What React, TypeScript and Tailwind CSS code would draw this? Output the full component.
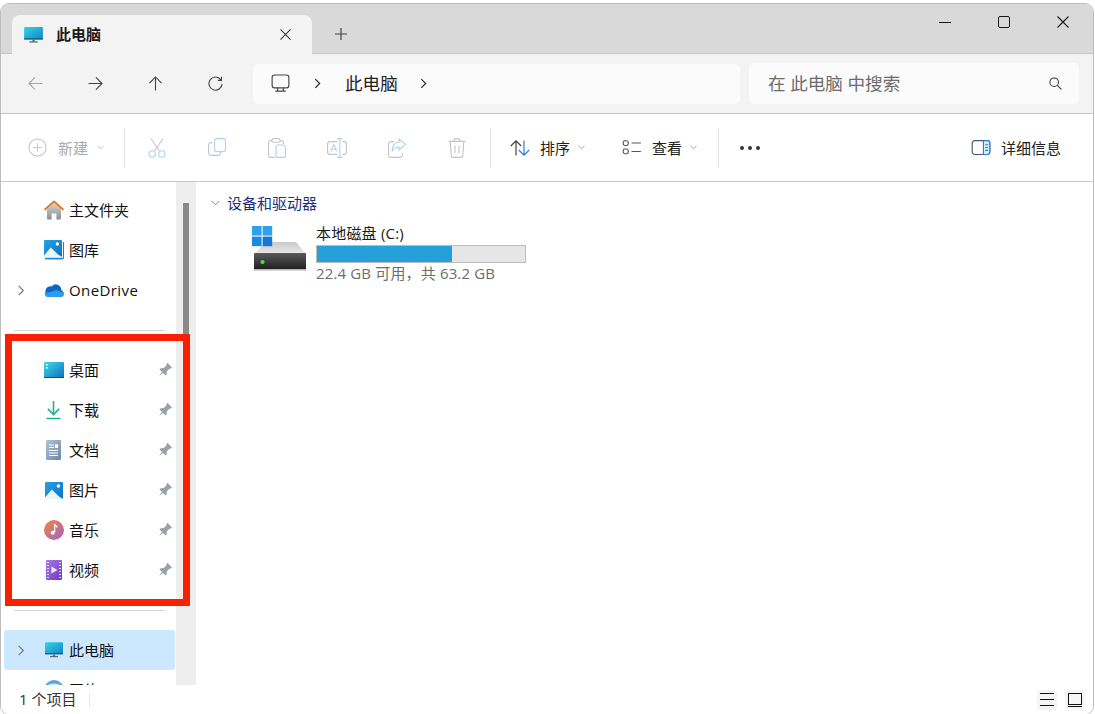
import React from 'react';

type IconProps = { className?: string };

const line = { fill: 'none', stroke: 'currentColor', strokeWidth: 1.2 };

// 导航 / 工具栏 图标
const ArrowLeft = ({ className }: IconProps) => (
  <svg viewBox="0 0 16 16" className={className} {...line}>
    <path d="M15.5 8H1M7.5 1.5 1 8l6.5 6.5" />
  </svg>
);
const ArrowRight = ({ className }: IconProps) => (
  <svg viewBox="0 0 16 16" className={className} {...line}>
    <path d="M.5 8H15M8.5 1.5 15 8l-6.5 6.5" />
  </svg>
);
const ArrowUp = ({ className }: IconProps) => (
  <svg viewBox="0 0 16 16" className={className} {...line}>
    <path d="M8 15.5V1M1.5 7.5 8 1l6.5 6.5" />
  </svg>
);
const Refresh = ({ className }: IconProps) => (
  <svg viewBox="0 0 16 16" className={className} {...line}>
    <path d="M13.8 4.2A7 7 0 1 0 15 8.4M14.4.8v3.9h-3.9" />
  </svg>
);
const Chevron = ({ className }: IconProps) => (
  <svg viewBox="0 0 8 12" className={className} fill="none" stroke="currentColor" strokeWidth={1.3}>
    <path d="M1.5 1 6.5 6l-5 5" />
  </svg>
);
const ChevronDown = ({ className }: IconProps) => (
  <svg viewBox="0 0 10 6" className={className} fill="none" stroke="currentColor" strokeWidth={1}>
    <path d="M.8.8 5 5l4.2-4.2" />
  </svg>
);
const Monitor = ({ className }: IconProps) => (
  <svg viewBox="0 0 20 20" className={className} {...line}>
    <rect x="1.2" y="1" width="17.6" height="13.6" rx="2.4" />
    <path d="M7 14.6v3M13 14.6v3M4.5 18h11" />
  </svg>
);
const Cross = ({ className }: IconProps) => (
  <svg viewBox="0 0 12 12" className={className} fill="none" stroke="currentColor" strokeWidth={1.1}>
    <path d="M.5.5l11 11M11.5.5l-11 11" />
  </svg>
);
const Search = ({ className }: IconProps) => (
  <svg viewBox="0 0 14 14" className={className} fill="none" stroke="currentColor" strokeWidth={1.1}>
    <circle cx="5.6" cy="5.6" r="4.6" />
    <path d="m9 9 4.4 4.4" />
  </svg>
);

const NewIcon = () => (
  <svg viewBox="0 0 20 20" className="w-[19px] h-[19px]" fill="none" strokeWidth={1.1}>
    <circle cx="10" cy="10" r="9" stroke="#c4c4c4" />
    <path d="M10 5.5v9M5.5 10h9" stroke="#a9d2f3" />
  </svg>
);
const CutIcon = () => (
  <svg viewBox="0 0 18 20" className="w-[18px] h-[20px]" fill="none" strokeWidth={1.1}>
    <path d="M3 .5 11.4 13M15 .5 6.6 13" stroke="#c4c4c4" />
    <circle cx="4.2" cy="16" r="3.2" stroke="#a9d2f3" />
    <circle cx="13.8" cy="16" r="3.2" stroke="#a9d2f3" />
  </svg>
);
const CopyIcon = () => (
  <svg viewBox="0 0 18 18" className="w-[18px] h-[18px]" fill="none" strokeWidth={1.1}>
    <path d="M4.5 4.6H3A2.4 2.4 0 0 0 .6 7v8A2.4 2.4 0 0 0 3 17.4h7a2.4 2.4 0 0 0 2.4-2.4v-1" stroke="#c4c4c4" />
    <rect x="6.6" y=".6" width="10.8" height="13" rx="2.4" stroke="#a9d2f3" />
  </svg>
);
const PasteIcon = () => (
  <svg viewBox="0 0 18 20" className="w-[18px] h-[20px]" fill="none" strokeWidth={1.1}>
    <path d="M4 2.6H2.6A2 2 0 0 0 .6 4.6v12.8a2 2 0 0 0 2 2H7M12 2.6h1.4a2 2 0 0 1 2 2V6" stroke="#c4c4c4" />
    <rect x="4" y=".6" width="8" height="3.6" rx="1.4" stroke="#c4c4c4" />
    <rect x="8" y="7" width="9.4" height="12.4" rx="2" stroke="#a9d2f3" />
  </svg>
);
const RenameIcon = () => (
  <svg viewBox="0 0 20 20" className="w-[20px] h-[20px]" fill="none" strokeWidth={1.1}>
    <path d="M10 3.6H3A2.4 2.4 0 0 0 .6 6v8A2.4 2.4 0 0 0 3 16.4h7M15.5 3.6H17A2.4 2.4 0 0 1 19.4 6v8a2.4 2.4 0 0 1-2.4 2.4h-1.5" stroke="#c4c4c4" />
    <path d="M10 .6h5.6M10 19.4h5.6M12.8.6v18.8M3.8 13.4 6.8 6.6l3 6.8M4.8 11.2h4" stroke="#a9d2f3" />
  </svg>
);
const ShareIcon = () => (
  <svg viewBox="0 0 18 20" className="w-[18px] h-[20px]" fill="none" strokeWidth={1.1}>
    <path d="M6 3.6H3A2.4 2.4 0 0 0 .6 6v11A2.4 2.4 0 0 0 3 19.4h9a2.4 2.4 0 0 0 2.4-2.4v-2" stroke="#c4c4c4" />
    <path d="M11 .8 17.4 6.4 11 12V9C7.5 9 5.4 10.4 4 13.4 4.2 8 6.8 4.4 11 4Z" stroke="#a9d2f3" />
  </svg>
);
const TrashIcon = () => (
  <svg viewBox="0 0 18 20" className="w-[18px] h-[20px]" fill="none" stroke="#c4c4c4" strokeWidth={1.1}>
    <path d="M.5 3.4h17M6 3.2V2.4A1.8 1.8 0 0 1 7.8.6h2.4A1.8 1.8 0 0 1 12 2.4v.8M2.2 3.6l1 13.6a2.2 2.2 0 0 0 2.2 2.2h7.2a2.2 2.2 0 0 0 2.2-2.2l1-13.6M7 7.6v7.6M11 7.6v7.6" />
  </svg>
);
const SortIcon = () => (
  <svg viewBox="0 0 20 16" className="w-[20px] h-[16px]" fill="none" strokeWidth={1.2}>
    <path d="M6 15.5V1M.8 6 6 .8 11.2 6" stroke="#444" />
    <path d="M14 .5V15M8.8 10l5.2 5.2 5.2-5.2" stroke="#1b84dc" />
  </svg>
);
const ViewIcon = () => (
  <svg viewBox="0 0 20 16" className="w-[20px] h-[15px]" fill="none" stroke="#555" strokeWidth={1.2}>
    <rect x=".6" y=".8" width="5.4" height="5" rx="1.8" />
    <rect x=".6" y="9.6" width="5.4" height="5" rx="1.8" />
    <path d="M9.5 3.2h10M9.5 12.2h10" />
  </svg>
);
const DetailsIcon = () => (
  <svg viewBox="0 0 20 16" className="w-[20px] h-[15px]" fill="none" strokeWidth={1.2}>
    <rect x=".6" y=".6" width="18.8" height="14.8" rx="2.8" stroke="#4b5563" />
    <path d="M12.6.6h4A2.8 2.8 0 0 1 19.4 3.4v9.2a2.8 2.8 0 0 1-2.8 2.8h-4Z" fill="#d6eafb" stroke="#1b84dc" />
    <path d="M14.5 5h3M14.5 8h3M14.5 11h3" stroke="#1b84dc" />
  </svg>
);

// 彩色图标
const PcIcon = ({ className }: IconProps) => (
  <svg viewBox="0 0 20 17" className={className}>
    <defs>
      <linearGradient id="pc" x1="0" y1="0" x2="1" y2="1">
        <stop offset="0" stopColor="#35d4e4" />
        <stop offset="1" stopColor="#1283c9" />
      </linearGradient>
    </defs>
    <rect x="0" y="0" width="20" height="13" rx="1" fill="url(#pc)" />
    <rect x="0" y="12" width="20" height="1.4" fill="#0b5a8a" />
    <rect x="8.6" y="13.4" width="2.8" height="2" fill="#5f7f90" />
    <rect x="5.6" y="15.2" width="8.8" height="1.3" fill="#56616b" />
  </svg>
);
const HomeIcon = () => (
  <svg viewBox="0 0 20 20" className="w-[20px] h-[20px]">
    <defs>
      <linearGradient id="hm" x1="0" y1="0" x2="0" y2="1">
        <stop offset="0" stopColor="#d4d4d4" />
        <stop offset="1" stopColor="#8f8f8f" />
      </linearGradient>
    </defs>
    <path d="M3 9 10 2.6 17 9v9.6a.8.8 0 0 1-.8.8H12.4v-6H7.6v6H3.8a.8.8 0 0 1-.8-.8Z" fill="url(#hm)" />
    <path d="M.6 9.8 10 1.4l9.4 8.4" fill="none" stroke="#e8750f" strokeWidth={1.9} />
  </svg>
);
const PictureGlyph = ({ id }: { id: string }) => (
  <>
    <defs>
      <linearGradient id={id} x1="0" y1="0" x2="1" y2="1">
        <stop offset="0" stopColor="#27a3e3" />
        <stop offset="1" stopColor="#0f6fc6" />
      </linearGradient>
    </defs>
    <rect x="0" y="0" width="18" height="17" rx="1" fill={`url(#${id})`} />
    <circle cx="13.4" cy="4" r="1.7" fill="#fff" />
    <path d="M0 15.6 6.8 7.6 14 14.6 18 17H0Z" fill="#eaf6fd" />
  </>
);
const GalleryIcon = () => (
  <svg viewBox="0 0 20 20" className="w-[20px] h-[20px]">
    <path d="M1 18.4h17.6a1 1 0 0 0 1-1V2" fill="none" stroke="#1c7fcf" strokeWidth={1.2} />
    <path d="M.6 19.4h18" fill="none" stroke="#8fc3ea" strokeWidth={1} />
    <PictureGlyph id="gal" />
  </svg>
);
const PictureIconSmall = () => (
  <svg viewBox="0 0 18 17" className="w-[18px] h-[17px]">
    <PictureGlyph id="pic" />
  </svg>
);
const CloudIcon = () => (
  <svg viewBox="0 0 20 13" className="w-[20px] h-[14px]" preserveAspectRatio="none">
    <path d="M5 12.8h11.8a3 3 0 0 0 .6-5.9A5.6 5.6 0 0 0 7.6 3.2 4.8 4.8 0 0 0 5 12.8Z" fill="#0f66c2" />
    <path d="M4 13h13.2a2.8 2.8 0 0 0 2.4-4L12 6.4 7 8.4 .6 9.2A3.8 3.8 0 0 0 4 13Z" fill="#2b9bea" />
  </svg>
);
const DesktopIcon = () => (
  <svg viewBox="0 0 20 16" className="w-[20px] h-[16px]">
    <defs>
      <linearGradient id="dsk" x1="0" y1="0" x2="1" y2="1">
        <stop offset="0" stopColor="#3edbe6" />
        <stop offset="1" stopColor="#0f6fc0" />
      </linearGradient>
    </defs>
    <rect width="20" height="16" rx="1" fill="url(#dsk)" />
    <rect y="15" width="20" height="1" fill="#0b4f7e" />
    <rect x="2" y="2" width="1.6" height="1.6" fill="#fff" />
    <rect x="2" y="5" width="1.6" height="1.6" fill="#fff" />
  </svg>
);
const DownloadIcon = () => (
  <svg viewBox="0 0 16 20" className="w-[15px] h-[20px]" fill="none" stroke="#1db394" strokeWidth={1.7}>
    <path d="M8 .5v14M2 8.8 8 14.8l6-6M.5 19h15" />
  </svg>
);
const DocIcon = () => (
  <svg viewBox="0 0 15 20" className="w-[15px] h-[20px]">
    <defs>
      <linearGradient id="doc" x1="0" y1="0" x2="1" y2="1">
        <stop offset="0" stopColor="#b4c3d6" />
        <stop offset="1" stopColor="#6b86a8" />
      </linearGradient>
    </defs>
    <rect width="15" height="20" rx="1.2" fill="url(#doc)" />
    <path d="M3 5h5M3 7.5h5M3 10.5h9M3 13h9M3 15.5h9" stroke="#fff" strokeWidth={1} />
    <rect x="9" y="4.4" width="3" height="3.6" fill="#fff" />
  </svg>
);
const MusicIcon = () => (
  <svg viewBox="0 0 20 20" className="w-[20px] h-[20px]">
    <defs>
      <linearGradient id="mus" x1="0" y1="0" x2="1" y2="1">
        <stop offset="0" stopColor="#ef8a3c" />
        <stop offset="1" stopColor="#a45fc9" />
      </linearGradient>
    </defs>
    <circle cx="10" cy="10" r="10" fill="url(#mus)" />
    <path d="M10.6 4v8" stroke="#fff" strokeWidth={1.3} fill="none" />
    <path d="M10.6 4c.4 2 2 2 2.6 3.4" stroke="#fff" strokeWidth={1.3} fill="none" />
    <circle cx="8.8" cy="12.8" r="2" fill="#fff" />
  </svg>
);
const VideoIcon = () => (
  <svg viewBox="0 0 16 20" className="w-[16px] h-[20px]">
    <defs>
      <linearGradient id="vid" x1="0" y1="0" x2="1" y2="1">
        <stop offset="0" stopColor="#a77be8" />
        <stop offset="1" stopColor="#7236c2" />
      </linearGradient>
    </defs>
    <rect width="16" height="20" rx="1.2" fill="url(#vid)" />
    <path d="M5.4 6.4 11.4 10l-6 3.6Z" fill="#f2e9fd" />
    <path d="M1 2.5h2M1 5.5h2M1 8.5h2M1 11.5h2M1 14.5h2M1 17.5h2M13 2.5h2M13 5.5h2M13 8.5h2M13 11.5h2M13 14.5h2M13 17.5h2" stroke="#e9defa" strokeWidth={1.2} />
  </svg>
);
const NetworkIcon = () => (
  <svg viewBox="0 0 20 20" className="w-[20px] h-[20px]">
    <circle cx="10" cy="10" r="10" fill="#5aa7de" />
    <path d="M4 5c3-2 9-2 12 0-3 3-9 3-12 0Z" fill="#cfe6f6" />
  </svg>
);
const PinIcon = () => (
  <svg viewBox="0 0 16 16" className="w-[15px] h-[15px] mt-[1px]" fill="#98a2aa">
    <g transform="rotate(45 8 8)">
      <path d="M4.6 0h6.8v1.6L10.4 2.8v4l2.2 2.4v1.8H3.4V9.2l2.2-2.4v-4L4.6 1.6Z" />
      <path d="M7.2 11h1.6L8 16.4Z" />
    </g>
  </svg>
);
const DriveIcon = () => (
  <svg viewBox="0 0 54 45" className="w-[54px] h-[45px]">
    <defs>
      <linearGradient id="drv" x1="0" y1="0" x2="0" y2="1">
        <stop offset="0" stopColor="#5a5a5a" />
        <stop offset="1" stopColor="#1e1e1e" />
      </linearGradient>
      <linearGradient id="drvTop" x1="0" y1="0" x2="0" y2="1">
        <stop offset="0" stopColor="#c9c9c9" />
        <stop offset="1" stopColor="#e9e9e9" />
      </linearGradient>
    </defs>
    <path d="M14 16h30l10 12H2Z" fill="url(#drvTop)" />
    <rect x="2" y="27" width="52" height="17" rx="1" fill="url(#drv)" />
    <rect x="2" y="43" width="52" height="1.5" fill="#b5b5b5" />
    <circle cx="10.5" cy="36" r="2.1" fill="#3bea3b" />
    <rect x="0" y="0" width="9.6" height="9.6" fill="#2ea3ec" />
    <rect x="10.6" y="0" width="9.6" height="9.6" fill="#2ea3ec" />
    <rect x="0" y="10.6" width="9.6" height="9.6" fill="#1a8be0" />
    <rect x="10.6" y="10.6" width="9.6" height="9.6" fill="#1478d4" />
  </svg>
);

const Divider = () => <div className="w-px h-[40px] bg-[#e3e3e3]" />;

const ToolSlot = ({ children }: { children: React.ReactNode }) => (
  <div className="w-[60px] flex justify-center">{children}</div>
);

interface NavRowProps {
  icon: React.ReactNode;
  label: string;
  pinned?: boolean;
  expand?: boolean;
  selected?: boolean;
  latin?: boolean;
}

const NavRow = ({ icon, label, pinned, expand, selected, latin }: NavRowProps) => (
  <div className={`h-[40px] w-[171px] ml-[3px] flex items-center shrink-0 rounded-[3px] ${selected ? 'bg-[#cce8ff]' : ''}`}>
    <div className="w-[37px] pl-[13px]">
      {expand && <Chevron className="w-[8px] h-[11px] text-[#777]" />}
    </div>
    <div className="w-[25px] flex justify-center">{icon}</div>
    <span className={`ml-[3px] flex-1 text-[15px] text-[#111] ${latin ? 'tracking-[0.4px]' : ''}`}>{label}</span>
    {pinned && (
      <div className="pr-[3px]">
        <PinIcon />
      </div>
    )}
  </div>
);

const NavDivider = () => (
  <div className="h-[40px] shrink-0 flex items-center">
    <div className="ml-[13px] w-[151px] h-px bg-[#d6d6d6]" />
  </div>
);

const App = () => {
  return (
    <div
      className="relative w-[1095px] h-[714px] bg-white pt-[3px] pr-[1px] overflow-hidden"
      style={{ fontFamily: '"Open Sans", "Noto Sans CJK SC", sans-serif' }}
    >
      <div className="w-[1094px] h-[712px] flex flex-col rounded-[9px] border border-[#bdbdbd] bg-white overflow-hidden">
        {/* 标签栏 */}
        <div className="h-[50px] shrink-0 bg-[#d9d9d9] border-b border-[#c6c6c6] flex items-end pl-[11px]">
          <div className="w-[300px] h-[39px] bg-[#f3f3f3] rounded-t-[8px] flex items-center pl-[12px] pr-[21px] -mb-px">
            <PcIcon className="w-[19px] h-[16px]" />
            <span className="ml-[13px] flex-1 text-[15px] font-semibold text-[#1a1a1a]">此电脑</span>
            <Cross className="w-[11px] h-[11px] text-[#333]" />
          </div>
          <div className="ml-[23px] h-[39px] flex items-center">
            <svg viewBox="0 0 12 12" className="w-[12px] h-[12px] text-[#444]" fill="none" stroke="currentColor" strokeWidth={1.2}>
              <path d="M6 0v12M0 6h12" />
            </svg>
          </div>
          <div className="flex-1 self-start h-[36px] flex items-center justify-end">
            <div className="w-[60px] flex justify-center">
              <div className="w-[12px] h-px bg-[#1a1a1a]" />
            </div>
            <div className="w-[59px] pr-[2px] flex justify-center">
              <div className="w-[12px] h-[12px] border border-[#1a1a1a] rounded-[2px]" />
            </div>
            <div className="w-[59px] pr-[1px] flex justify-center">
              <Cross className="w-[12px] h-[12px] text-[#1a1a1a]" />
            </div>
          </div>
        </div>

        {/* 地址栏 */}
        <div className="h-[60px] shrink-0 bg-[#f3f3f3] border-b border-[#c6c6c6] flex items-center">
          <div className="w-[252px] pl-[27px] flex gap-[45px]">
            <ArrowLeft className="w-[15px] h-[15px] text-[#a8a8a8]" />
            <ArrowRight className="w-[15px] h-[15px] text-[#444]" />
            <ArrowUp className="w-[15px] h-[15px] text-[#444]" />
            <Refresh className="w-[15px] h-[15px] text-[#444]" />
          </div>
          <div className="w-[487px] h-[40px] bg-[#fbfbfb] rounded-[5px] flex items-center pl-[18px]">
            <Monitor className="w-[19px] h-[19px] text-[#444]" />
            <Chevron className="ml-[24px] w-[7px] h-[11px] text-[#222]" />
            <span className="ml-[24px] text-[17.6px] text-[#222]">此电脑</span>
            <Chevron className="ml-[22px] w-[7px] h-[11px] text-[#222]" />
          </div>
          <div className="ml-[9px] w-[330px] h-[41px] bg-[#fbfbfb] rounded-[5px] flex items-center pl-[19px] pr-[17px]">
            <span className="flex-1 text-[17.6px] text-[#6b6b6b]">在 此电脑 中搜索</span>
            <Search className="w-[13px] h-[13px] text-[#333]" />
          </div>
        </div>

        {/* 工具栏 */}
        <div className="h-[68px] shrink-0 bg-white border-b border-[#c6c6c6] flex items-center">
          <div className="w-[123px] pl-[27px] flex items-center">
            <NewIcon />
            <span className="ml-[11px] mt-[2px] text-[15px] text-[#aaaaaa]">新建</span>
            <ChevronDown className="ml-[9px] w-[7px] h-[5px] text-[#aaaaaa]" />
          </div>
          <Divider />
          <div className="flex ml-[2px] mr-[3px]">
            <ToolSlot><CutIcon /></ToolSlot>
            <ToolSlot><CopyIcon /></ToolSlot>
            <ToolSlot><PasteIcon /></ToolSlot>
            <ToolSlot><RenameIcon /></ToolSlot>
            <ToolSlot><ShareIcon /></ToolSlot>
            <ToolSlot><TrashIcon /></ToolSlot>
          </div>
          <Divider />
          <div className="ml-[19px] flex items-center w-[88px]">
            <SortIcon />
            <span className="ml-[10px] mt-[2px] text-[15px] text-[#222]">排序</span>
            <ChevronDown className="ml-[8px] w-[7px] h-[5px] text-[#777]" />
          </div>
          <div className="ml-[24px] flex items-center w-[96px]">
            <ViewIcon />
            <span className="ml-[10px] mt-[2px] text-[15px] text-[#222]">查看</span>
            <ChevronDown className="ml-[8px] w-[7px] h-[5px] text-[#777]" />
          </div>
          <Divider />
          <div className="ml-[21px] flex gap-[4px]">
            <div className="w-[4px] h-[4px] rounded-full bg-[#333]" />
            <div className="w-[4px] h-[4px] rounded-full bg-[#333]" />
            <div className="w-[4px] h-[4px] rounded-full bg-[#333]" />
          </div>
          <div className="ml-auto pr-[32px] flex items-center">
            <DetailsIcon />
            <span className="ml-[10px] mt-[2px] text-[15px] text-[#222]">详细信息</span>
          </div>
        </div>

        {/* 主体 */}
        <div className="flex-1 min-h-0 flex">
          <div className="w-[175px] shrink-0 flex flex-col overflow-hidden pt-[8px]">
            <NavRow icon={<HomeIcon />} label="主文件夹" />
            <NavRow icon={<GalleryIcon />} label="图库" />
            <NavRow icon={<CloudIcon />} label="OneDrive" expand latin />
            <NavDivider />
            <NavRow icon={<DesktopIcon />} label="桌面" pinned />
            <NavRow icon={<DownloadIcon />} label="下载" pinned />
            <NavRow icon={<DocIcon />} label="文档" pinned />
            <NavRow icon={<PictureIconSmall />} label="图片" pinned />
            <NavRow icon={<MusicIcon />} label="音乐" pinned />
            <NavRow icon={<VideoIcon />} label="视频" pinned />
            <NavDivider />
            <NavRow icon={<PcIcon className="w-[18px] h-[16px]" />} label="此电脑" expand selected />
            <NavRow icon={<NetworkIcon />} label="网络" expand />
          </div>
          <div className="w-[20px] shrink-0 bg-[#eeeeee] pt-[21px] pl-[7px]">
            <div className="w-[6px] h-[300px] bg-[#8a8a8a]" />
          </div>
          <div className="flex-1 pl-[15px] pt-[11px]">
            <div className="flex items-center h-[20px]">
              <ChevronDown className="w-[9px] h-[6px] text-[#777]" />
              <span className="ml-[7px] text-[15px] text-[#1b2f7a]">设备和驱动器</span>
            </div>
            <div className="ml-[41px] mt-[13px] flex">
              <DriveIcon />
              <div className="ml-[10px] w-[210px] -mt-[3px]">
                <div className="text-[15px] leading-[20px] text-[#1a1a1a] tracking-[0.2px]">本地磁盘 (C:)</div>
                <div className="h-[18px] mt-[2px] border border-[#bcbcbc] bg-[#e6e6e6]">
                  <div className="h-full w-[135px] bg-[#26a0da]" />
                </div>
                <div className="text-[15px] leading-[21px] text-[#6d6d6d] tracking-[0.15px]">22.4 GB 可用，共 63.2 GB</div>
              </div>
            </div>
          </div>
        </div>

        {/* 状态栏 */}
        <div className="h-[29px] shrink-0 bg-white flex items-center pl-[18px] pr-[8px]">
          <span className="text-[15px] text-[#333]">1 个项目</span>
          <div className="ml-[13px] w-px h-[14px] bg-[#e6e6e6]" />
          <div className="ml-auto flex items-center gap-[8px]">
            <div className="w-[20px] h-[20px] rounded-[2px] bg-[#f5f5f5] flex flex-col justify-center gap-[5px] px-[3px]">
              <div className="h-px bg-[#111]" />
              <div className="h-px bg-[#111]" />
              <div className="h-px bg-[#111]" />
            </div>
            <div className="w-[20px] h-[20px] rounded-[2px] bg-[#f5f5f5] flex flex-col justify-center gap-[1px] px-[3px]">
              <div className="h-[12px] border border-[#111]" />
              <div className="h-px bg-[#111]" />
            </div>
          </div>
        </div>
      </div>

      {/* 红色高亮框 */}
      <div className="absolute left-[5px] top-[334px] w-[185px] h-[272px] border-[7px] border-[#f92000]" />
    </div>
  );
};

export default App;
